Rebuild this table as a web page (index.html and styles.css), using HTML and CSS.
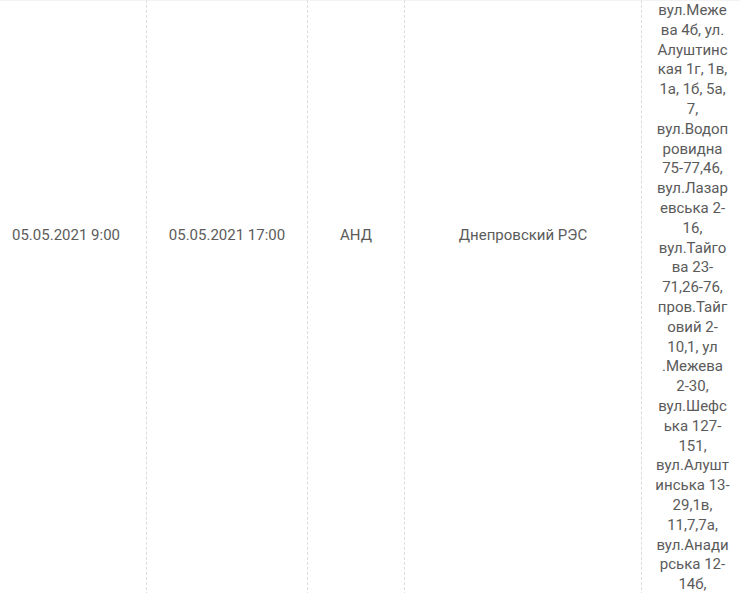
FILE: index.html
```html
<!DOCTYPE html>
<html lang="uk">
<head>
    <meta charset="UTF-8">
    <meta name="viewport" content="width=device-width, initial-scale=1.0">
    <title>Графік відключень</title>
    <link rel="stylesheet" href="styles.css">
</head>
<body>
    <table class="outages">
        <colgroup>
            <col class="col-start">
            <col class="col-end">
            <col class="col-type">
            <col class="col-res">
            <col class="col-addr">
        </colgroup>
        <tbody>
            <tr>
                <td class="cell cell-first">05.05.2021 9:00</td>
                <td class="cell">05.05.2021 17:00</td>
                <td class="cell">АНД</td>
                <td class="cell">Днепровский РЭС</td>
                <td class="cell cell-addr">
                    вул.Меже<br>ва 4б, ул.<br>Алуштинс<br>кая 1г, 1в,<br>1а, 1б, 5а,<br>7,<br>вул.Водоп<br>ровидна<br>75-77,46,<br>вул.Лазар<br>евська 2-<br>16,<br>вул.Тайго<br>ва 23-<br>71,26-76,<br>пров.Тайг<br>овий 2-<br>10,1, ул<br>.Межева<br>2-30,<br>вул.Шефс<br>ька 127-<br>151,<br>вул.Алушт<br>инська 13-<br>29,1в,<br>11,7,7а,<br>вул.Анади<br>рська 12-<br>14б,
                </td>
            </tr>
        </tbody>
    </table>
</body>
</html>
```

FILE: styles.css
```css
/* Таблица отключений */
html,
body {
    overflow: hidden;
}

body {
    margin: 0;
    padding: 0;
    background-color: #fff;
    font-family: Roboto, 'Liberation Sans', sans-serif;
    font-size: 15px;
    line-height: 1.32;
    color: #5b5b5b;
}

.outages {
    width: 743px;
    table-layout: fixed;
    border-collapse: separate;
    border-spacing: 0;
}

.col-start { width: 146px; }
.col-end { width: 161px; }
.col-type { width: 97px; }
.col-res { width: 237px; }
.col-addr { width: 102px; }

.cell {
    vertical-align: top;
    text-align: center;
    padding: 225px 10px 0 10px; /* текст дат по центру строки */
    border-top: 1px solid #f3f3f3;
    border-left: 1px dashed #dcdcdc;
}

.cell-first {
    border-left: none;
    padding-right: 24px;
}

.cell-addr {
    padding-top: 0;
    white-space: nowrap;
}
```
